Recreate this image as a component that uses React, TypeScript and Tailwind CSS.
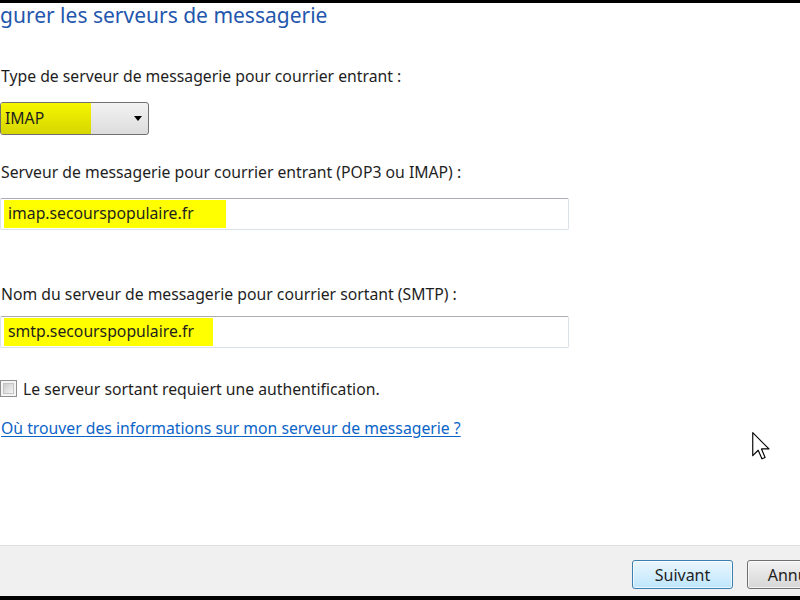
const font = { fontFamily: '"Noto Sans", "Open Sans", sans-serif' };

function Cursor() {
  return (
    <svg
      className="absolute left-[752px] top-[429px]"
      width="18"
      height="28"
      viewBox="0 0 12.5 19.5"
    >
      <path
        d="M0.5 0.5 L0.5 16.5 L4.3 12.7 L6.9 18.7 L9.1 17.7 L6.6 11.8 L11.8 11.8 Z"
        fill="#ffffff"
        stroke="#000000"
        strokeWidth="0.8"
        strokeLinejoin="round"
      />
    </svg>
  );
}

function TextBox({ value, mark }: { value: string; mark: string }) {
  return (
    <div className="h-[32px] w-[569px] rounded-[2px] border border-[#dbe1e8] border-t-[#abadb3] bg-white px-[3px] py-px">
      <div className={`flex h-full items-center bg-[#ffff00] pl-[4px] ${mark}`}>
        <span className="text-[15.75px] text-[#1e1e1e]">{value}</span>
      </div>
    </div>
  );
}

export default function App() {
  return (
    <div className="flex h-[600px] w-[800px] flex-col overflow-hidden bg-black pb-[4px] pt-[3px]" style={font}>
      <main className="relative flex flex-1 flex-col bg-white pl-px">
        <h1 className="-ml-px text-[21px] leading-[24px] text-[#2356ad]">
          gurer les serveurs de messagerie
        </h1>

        <p className="mt-[39px] text-[15.75px] leading-[20px] text-[#1e1e1e]">
          Type de serveur de messagerie pour courrier entrant :
        </p>
        <div className="-ml-px mt-[16px] flex h-[33px] w-[149px] overflow-hidden rounded-[3px] border border-[#707070] bg-gradient-to-b from-[#f3f3f3] to-[#dcdcdc]">
          <div className="flex h-full w-[90px] items-center bg-gradient-to-b from-[#f6f600] to-[#d6d600] pl-[4px]">
            <span className="text-[15.75px] text-[#1e1e1e]">IMAP</span>
          </div>
          <div className="flex flex-1 items-center justify-end pr-[6px]">
            <span className="h-0 w-0 border-x-[4px] border-t-[5px] border-x-transparent border-t-black" />
          </div>
        </div>

        <p className="mt-[27px] text-[15.75px] leading-[20px] text-[#1e1e1e]">
          Serveur de messagerie pour courrier entrant (POP3 ou IMAP) :
        </p>
        <div className="-ml-px mt-[16px]">
          <TextBox value="imap.secourspopulaire.fr" mark="w-[222px]" />
        </div>

        <p className="mt-[54px] text-[15.75px] leading-[20px] text-[#1e1e1e]">
          Nom du serveur de messagerie pour courrier sortant (SMTP) :
        </p>
        <div className="-ml-px mt-[12px]">
          <TextBox value="smtp.secourspopulaire.fr" mark="w-[209px]" />
        </div>

        <label className="-ml-px mt-[31px] flex items-start gap-[6px] text-[15.75px] leading-[20px] text-[#1e1e1e]">
          <span className="mt-px block h-[17px] w-[17px] border border-[#8f8f8f] bg-[#f4f4f4] p-[2px]">
            <span className="block h-full w-full border border-[#c4c4c4] bg-gradient-to-br from-[#cbcbcb] to-[#f5f5f5]" />
          </span>
          Le serveur sortant requiert une authentification.
        </label>

        <a className="mt-[19px] self-start text-[15.75px] leading-[20px] text-[#0a64c8] underline underline-offset-2">
          Où trouver des informations sur mon serveur de messagerie ?
        </a>

        <Cursor />
      </main>

      <footer className="flex h-[51px] shrink-0 items-start gap-[14px] border-t border-[#dfdfdf] bg-[#f0f0f0] pl-[632px] pt-[14px]">
        <button className="flex h-[29px] w-[101px] shrink-0 items-center justify-center rounded-[3px] border border-[#3c7fb1] bg-gradient-to-b from-[#eaf6fd] to-[#bee6fd] text-[16px] text-[#1e1e1e] shadow-[inset_0_0_0_1px_#ffffffaa]">
          Suivant
        </button>
        <button className="flex h-[29px] w-[101px] shrink-0 items-center justify-center rounded-[3px] border border-[#707070] bg-gradient-to-b from-[#f2f2f2] to-[#d6d6d6] text-[16px] text-[#1e1e1e] shadow-[inset_0_0_0_1px_#ffffffaa]">
          Annuler
        </button>
      </footer>
    </div>
  );
}
